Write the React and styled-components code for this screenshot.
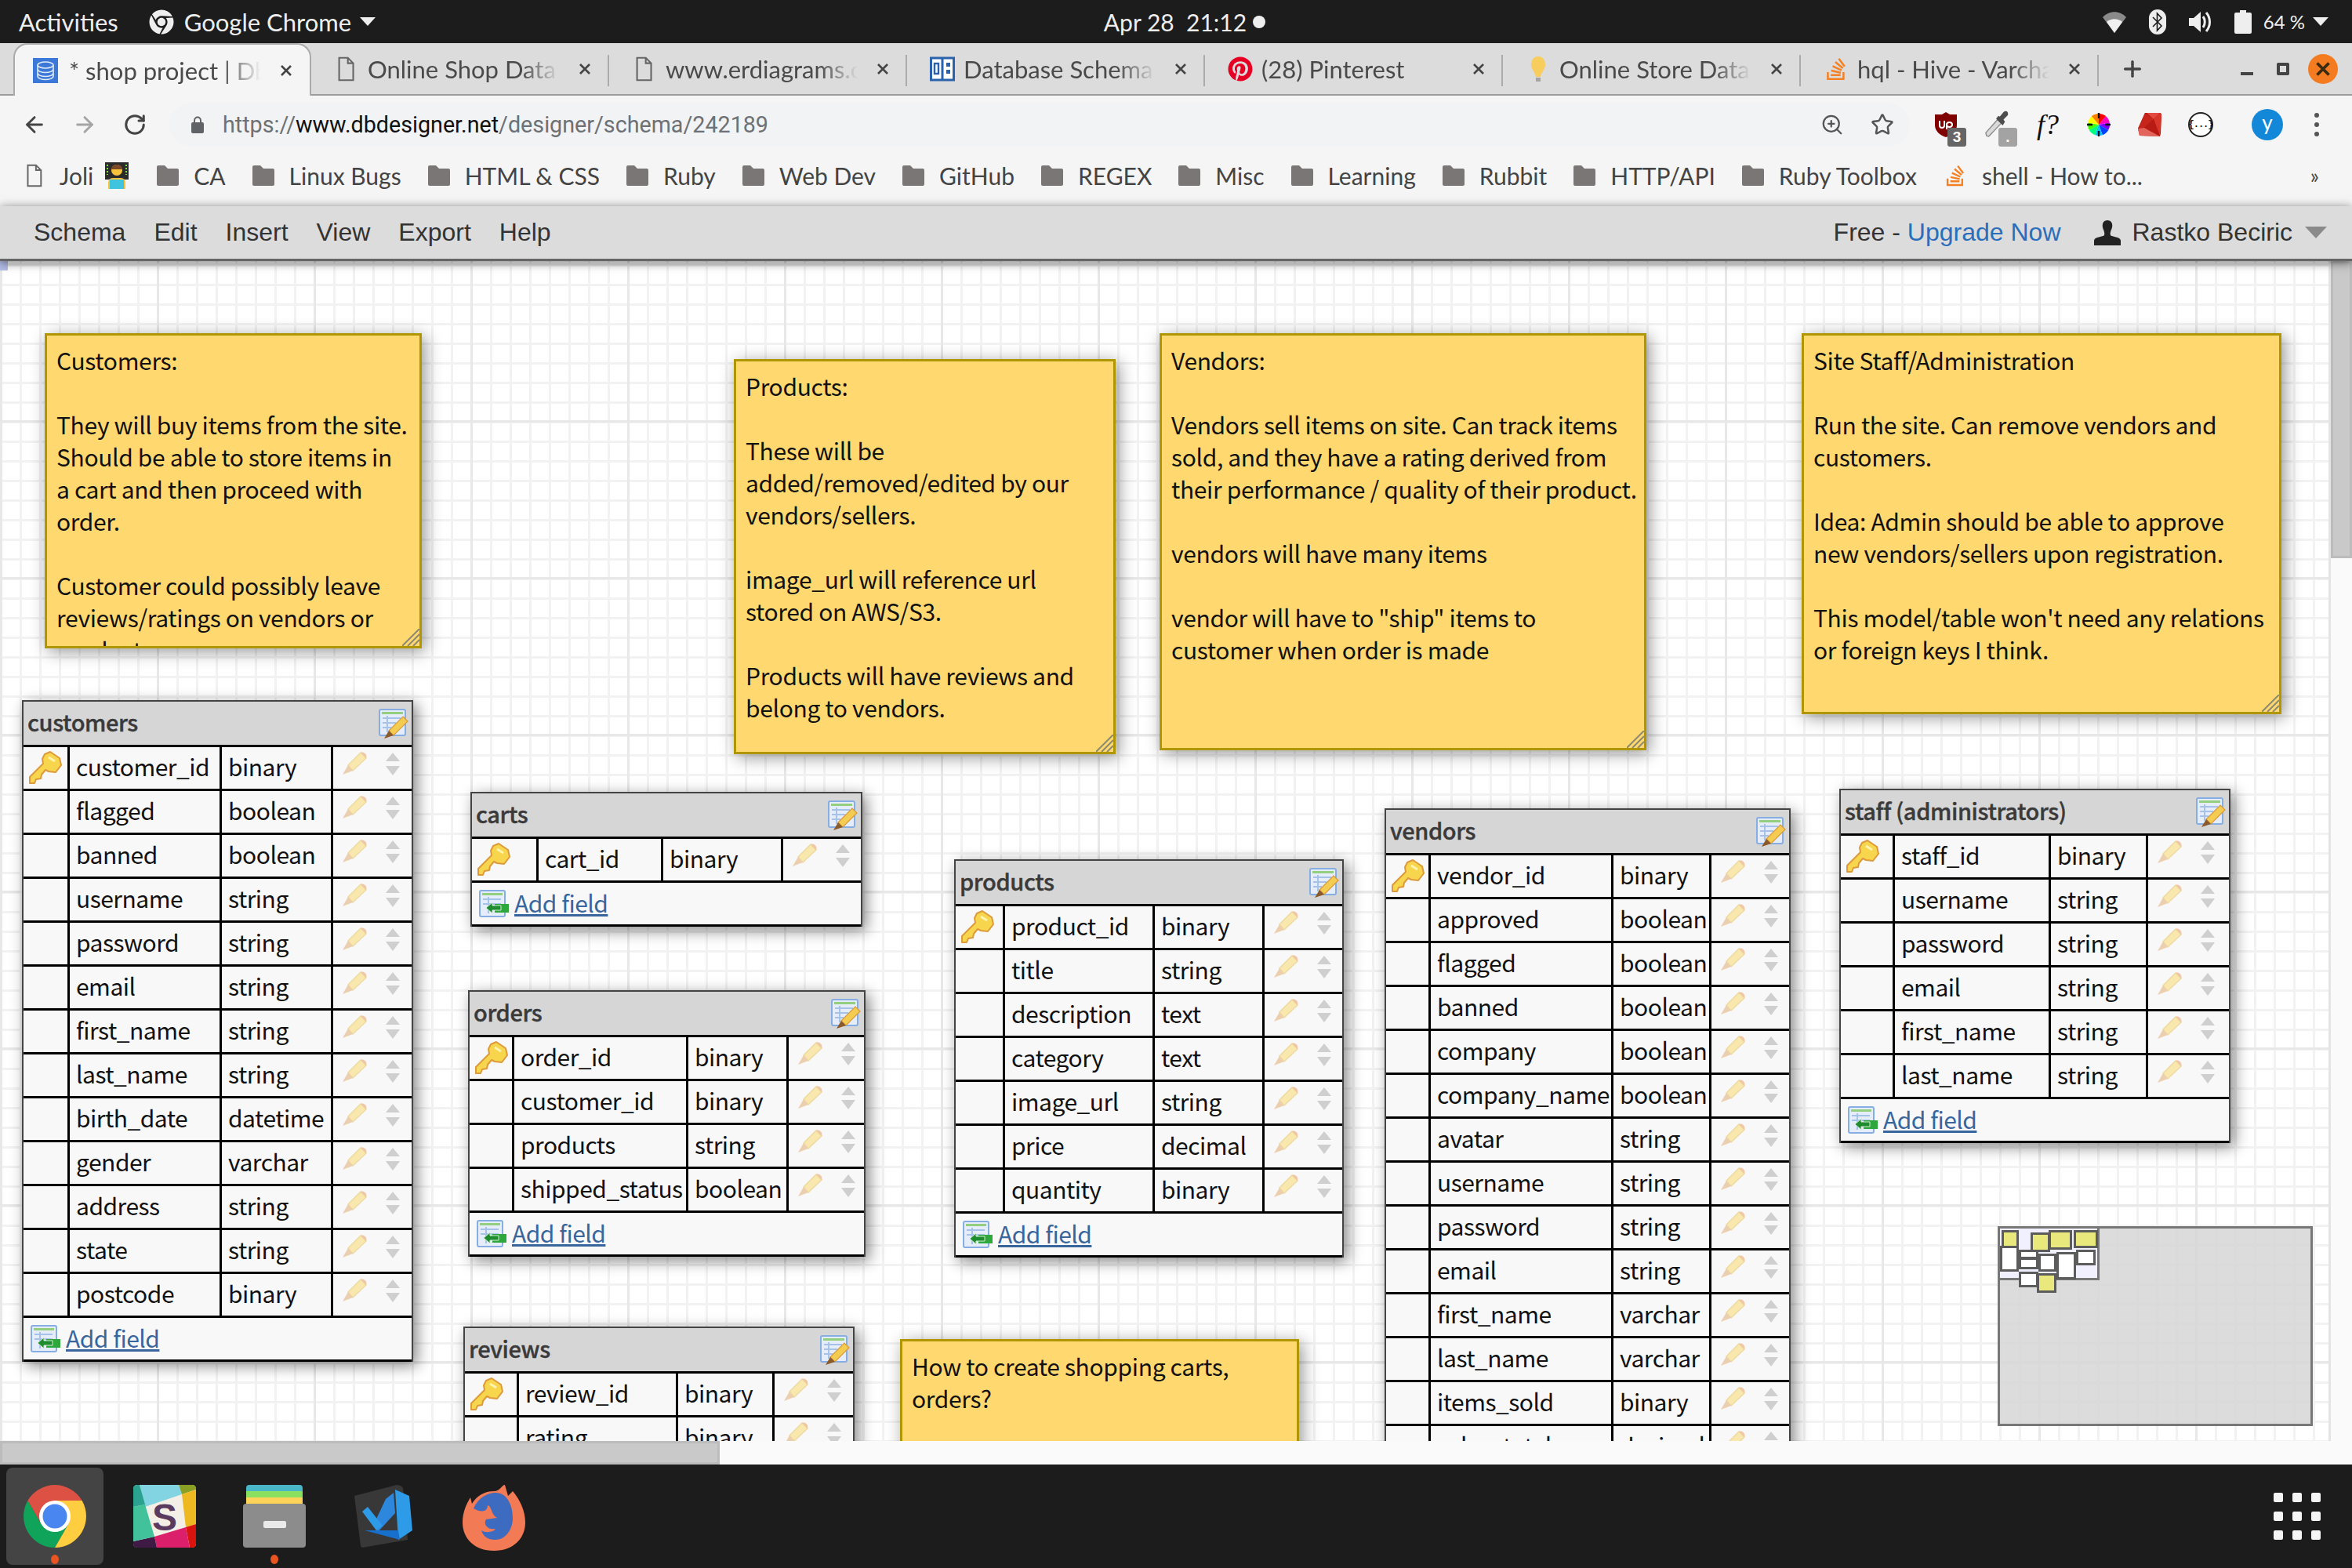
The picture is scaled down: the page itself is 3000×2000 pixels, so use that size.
import React from "react";
import styled, { createGlobalStyle } from "styled-components";
import { ArrowLeft, ArrowRight, RotateCw, ZoomIn, Star, Plus } from "lucide-react";
import { FaChrome, FaPinterest, FaStackOverflow } from "react-icons/fa";

const Global = createGlobalStyle`
  html, body { margin: 0; padding: 0; background: #fff; }
  * { box-sizing: border-box; }
`;

const UI_FONT = `Lato, "Open Sans", sans-serif`;
const CANVAS_FONT = `"Noto Sans CJK SC", "Noto Sans", sans-serif`;

const Page = styled.div`
  width: 3000px;
  height: 2000px;
  display: flex;
  flex-direction: column;
  overflow: hidden;
`;

/* ---------- gnome top bar ---------- */
const TopBar = styled.div`
  height: 55px;
  flex: none;
  background: #1c1c1c;
  color: #eee;
  font: 400 31px ${UI_FONT};
  display: grid;
  grid-template-columns: 1fr auto 1fr;
  align-items: center;
  padding: 0 30px 0 24px;
`;
const TopLeft = styled.div`
  display: flex;
  align-items: center;
`;
const AppName = styled.span`
  margin: 0 11px 0 13px;
`;
const Activities = styled.span`
  margin-right: 39px;
`;
const Clock = styled.div`
  display: flex;
  align-items: center;
  gap: 8px;
  padding-left: 28px;
  white-space: pre;
  font-size: 30px;
`;
const RecDot = styled.span`
  width: 16px;
  height: 16px;
  border-radius: 50%;
  background: #eee;
`;
const TopRight = styled.div`
  display: flex;
  align-items: center;
  justify-content: flex-end;
  gap: 28px;
`;
const Battery = styled.span`
  font-size: 24px;
  margin-left: -13px;
  margin-right: -18px;
`;
const Caret = styled.span`
  width: 0;
  height: 0;
  border-left: ${(p) => p.$size || 10}px solid transparent;
  border-right: ${(p) => p.$size || 10}px solid transparent;
  border-top: ${(p) => (p.$size || 10) * 1.1}px solid ${(p) => p.$color || "#eee"};
`;

/* ---------- chrome tabs ---------- */
const TabStrip = styled.div`
  height: 67px;
  flex: none;
  background: #dcdcdc;
  border-bottom: 2px solid #9c9c9c;
  display: flex;
  padding-left: 17px;
  font: 400 31px ${UI_FONT};
  color: #4a4a4a;
  position: relative;
`;
const Tab = styled.div`
  width: 380px;
  height: ${(p) => (p.$active ? 67 : 65)}px;
  flex: none;
  display: flex;
  align-items: center;
  position: relative;
  padding-left: ${(p) => (p.$active ? 23 : 29)}px;
  ${(p) =>
    p.$active &&
    `
    background: #f5f5f5;
    border: 2px solid #aaa;
    border-bottom: none;
    border-radius: 18px 18px 0 0;
    z-index: 1;
  `}
  ${(p) =>
    p.$sep &&
    `
    &::after {
      content: "";
      position: absolute;
      right: 0;
      top: 15px;
      height: 40px;
      width: 2px;
      background: #ababab;
    }
  `}
`;
const TabIcon = styled.span`
  width: 32px;
  height: 32px;
  flex: none;
  display: flex;
  align-items: center;
  justify-content: center;
  margin-right: ${(p) => (p.$active ? 14 : 11)}px;
`;
const TabTitle = styled.span`
  width: 245px;
  overflow: hidden;
  white-space: nowrap;
  margin-right: 24px;
  mask-image: linear-gradient(to right, #000 80%, transparent 100%);
`;
const NewTab = styled.div`
  width: 60px;
  display: flex;
  align-items: center;
  justify-content: center;
  color: #444;
  margin-left: 13px;
`;
const WindowButtons = styled.div`
  margin-left: auto;
  display: flex;
  align-items: center;
  padding-right: 18px;
  gap: 30px;
`;
const Minimize = styled.span`
  width: 16px;
  height: 4px;
  background: #444;
  margin-top: 12px;
`;
const Maximize = styled.span`
  width: 16px;
  height: 16px;
  border: 4px solid #444;
  border-radius: 2px;
`;
const CloseWin = styled.span`
  width: 38px;
  height: 38px;
  border-radius: 50%;
  background: #f47b20;
  display: flex;
  align-items: center;
  justify-content: center;
  margin-left: -6px;
`;

/* ---------- address bar ---------- */
const Toolbar = styled.div`
  height: 65px;
  flex: none;
  background: #f5f5f5;
  display: flex;
  align-items: center;
  padding: 9px 0 0 28px;
  color: #555;
`;
const NavButton = styled.span`
  width: 32px;
  display: flex;
  justify-content: center;
  margin-right: 32px;
  color: ${(p) => (p.$off ? "#a5a5a5" : "#444")};
`;
const Omnibox = styled.div`
  width: 2220px;
  height: 56px;
  margin-left: -4px;
  border-radius: 28px;
  background: #f1f3f4;
  display: flex;
  align-items: center;
  padding: 0 20px 0 28px;
  font: 400 28.7px Roboto, sans-serif;
  color: #6d7175;
`;
const Url = styled.span`
  margin-left: 24px;
  flex: 1;
`;
const Domain = styled.span`
  color: #111;
`;
const OmniIcons = styled.div`
  display: flex;
  align-items: center;
  gap: 34px;
  color: #555;
`;
const Extensions = styled.div`
  display: flex;
  align-items: center;
  gap: 33px;
  margin-left: 30px;
`;
const Ext = styled.span`
  width: 32px;
  height: 32px;
  position: relative;
  display: flex;
  align-items: center;
  justify-content: center;
`;
const Badge = styled.span`
  position: absolute;
  left: 18px;
  top: 20px;
  width: 24px;
  height: 24px;
  border-radius: 3px;
  background: ${(p) => p.$bg};
  color: #fff;
  font: 700 19px "Liberation Sans", sans-serif;
  display: flex;
  align-items: center;
  justify-content: center;
`;
const FormulaGlyph = styled.span`
  font: italic 400 36px "Liberation Serif", serif;
  color: #111;
  white-space: nowrap;
`;
const CurlyGlyph = styled.span`
  width: 32px;
  height: 32px;
  border-radius: 50%;
  border: 2px solid #222;
  background: #fff;
  font: 700 12px "Liberation Mono", monospace;
  letter-spacing: -1px;
  color: #111;
  display: flex;
  align-items: center;
  justify-content: center;
`;
const Avatar = styled.span`
  width: 40px;
  height: 40px;
  border-radius: 50%;
  background: #1488d8;
  color: #fff;
  font: 400 26px ${UI_FONT};
  display: flex;
  align-items: center;
  justify-content: center;
  margin-left: 49px;
  padding-bottom: 6px;
`;
const Kebab = styled.span`
  width: 6px;
  margin-left: 40px;
  display: flex;
  flex-direction: column;
  gap: 6px;
  i {
    display: block;
    width: 6px;
    height: 6px;
    border-radius: 50%;
    background: #555;
  }
`;

/* ---------- bookmarks ---------- */
const Bookmarks = styled.div`
  height: 76px;
  flex: none;
  background: #f5f5f5;
  display: flex;
  align-items: center;
  padding: 0 42px 2px 34px;
  gap: 34px;
  font: 400 30px ${UI_FONT};
  color: #444;
`;
const Bookmark = styled.div`
  display: flex;
  align-items: center;
  gap: ${(p) => p.$gap ?? 19}px;
  white-space: nowrap;
`;
const EmojiMark = styled.svg`
  margin-left: -9px;
`;
const More = styled.span`
  margin-left: auto;
  font-size: 26px;
`;

/* ---------- dbdesigner menu ---------- */
const MenuBar = styled.div`
  height: 70px;
  flex: none;
  background: #dcdcdc;
  border-bottom: 3px solid #666;
  box-shadow: 0 2px 12px rgba(0, 0, 0, 0.55);
  position: relative;
  z-index: 5;
  display: flex;
  align-items: center;
  padding: 0 32px 0 43px;
  font: 400 32px "Liberation Sans", sans-serif;
  color: #333;
`;
const MenuItems = styled.div`
  display: flex;
  gap: 36px;
`;
const Account = styled.div`
  margin-left: auto;
  display: flex;
  align-items: center;
`;
const Upgrade = styled.span`
  color: #2a6ebb;
  margin-right: 42px;
`;
const UserName = styled.span`
  margin: 0 16px 0 15px;
`;

/* ---------- canvas ---------- */
const Workspace = styled.div`
  height: 1505px;
  flex: none;
  display: flex;
`;
const Canvas = styled.div`
  width: 2970px;
  height: 1505px;
  position: relative;
  overflow: hidden;
  background-color: #fff;
  background-image: linear-gradient(to right, #e8e8e8 3px, transparent 3px),
    linear-gradient(to bottom, #e8e8e8 3px, transparent 3px),
    linear-gradient(to right, #f2f2f2 3px, transparent 3px),
    linear-gradient(to bottom, #f2f2f2 3px, transparent 3px);
  background-size: 200px 200px, 200px 200px, 25px 25px, 25px 25px;
  background-position: 0 3px, 0 3px, 0 3px, 0 4px;
`;
const Marker = styled.div`
  position: absolute;
  left: 0;
  top: 0;
  width: 10px;
  height: 12px;
  background: #b3bde8;
`;
const VTrack = styled.div`
  width: 30px;
  background: #fafafa;
  border-left: 3px solid #e4e4e4;
`;
const VThumb = styled.div`
  height: 379px;
  background: #c9c9c9;
  border: 3px solid #bcbcbc;
`;
const HTrack = styled.div`
  height: 30px;
  flex: none;
  background: #fafafa;
`;
const HThumb = styled.div`
  width: 918px;
  height: 30px;
  background: #c9c9c9;
  border: 3px solid #bcbcbc;
`;

const Note = styled.div`
  position: absolute;
  left: ${(p) => p.$x}px;
  top: ${(p) => p.$y}px;
  width: ${(p) => p.$w}px;
  height: ${(p) => p.$h}px;
  background: #ffd86f;
  border: 3px solid #b09600;
  box-shadow: 4px 4px 20px rgba(0, 0, 0, 0.42);
  padding: 11px 12px;
  overflow: hidden;
  white-space: pre;
  font: 400 30px/41px ${CANVAS_FONT};
  letter-spacing: -0.35px;
  color: #111;
`;
const NoteGrip = styled.svg`
  position: absolute;
  right: 0;
  bottom: 0;
`;

const Table = styled.div`
  position: absolute;
  left: ${(p) => p.$x}px;
  top: ${(p) => p.$y}px;
  width: ${(p) => p.$w}px;
  border: 2px solid #444;
  border-bottom: none;
  background: #f8f8f8;
  box-shadow: 5px 5px 18px rgba(0, 0, 0, 0.48);
  font: 400 30px ${CANVAS_FONT};
  letter-spacing: -0.5px;
  color: #111;
`;
const TableHead = styled.div`
  height: 55px;
  background: #d6d6d6;
  display: flex;
  align-items: center;
  justify-content: space-between;
  padding: 0 4px 0 5px;
  font-weight: 500;
  font-size: 29px;
  letter-spacing: -0.4px;
  color: #3a3a3a;
  -webkit-text-stroke: 0.4px #3a3a3a;
  span {
    margin-bottom: 5px;
  }
`;
const FieldRow = styled.div`
  height: 56px;
  border-top: 3px solid #000;
  display: grid;
  grid-template-columns: ${(p) => p.$cols.map((c) => `${c}px`).join(" ")} 1fr;
`;
const KeyCell = styled.div`
  border-right: 3px solid #000;
  padding: 5px 0 0 7px;
`;
const TextCell = styled.div`
  border-right: 3px solid #000;
  padding-left: 8px;
  line-height: 48px;
  white-space: nowrap;
  overflow: hidden;
`;
const ActionCell = styled.div`
  display: flex;
  padding: 6px 0 0 12px;
  gap: 24px;
`;
const TableFoot = styled.div`
  height: 59px;
  border-top: 3px solid #000;
  border-bottom: 3px solid #000;
  display: flex;
  align-items: center;
  padding-left: 9px;
  gap: 7px;
`;
const AddLink = styled.span`
  color: #38669c;
  text-decoration: underline;
  line-height: 1;
  margin-bottom: 3px;
`;

const MiniMap = styled.div`
  position: absolute;
  left: 2548px;
  top: 1231px;
  width: 402px;
  height: 255px;
  background: rgba(214, 214, 214, 0.85);
  border: 3px solid #777;
`;
const MiniView = styled.div`
  position: absolute;
  left: 0;
  top: 0;
  width: 127px;
  height: 66px;
  background: #f0f0ff;
  border-right: 3px solid #777;
  border-bottom: 3px solid #777;
`;
const MiniNode = styled.div`
  position: absolute;
  left: ${(p) => p.$x}px;
  top: ${(p) => p.$y}px;
  width: ${(p) => p.$w}px;
  height: ${(p) => p.$h}px;
  border: 3px solid #5c5c5c;
  background: ${(p) => (p.$note ? "#e8e87c" : "#fff")};
`;

/* ---------- dock ---------- */
const Dock = styled.div`
  flex: 1;
  background: #1c1c1c;
  display: flex;
  align-items: center;
  padding: 0 40px 0 8px;
`;
const DockItem = styled.div`
  width: 124px;
  height: 124px;
  margin-right: 16px;
  border-radius: 8px;
  background: ${(p) => (p.$active ? "#444" : "transparent")};
  display: flex;
  justify-content: center;
  padding-top: 22px;
  position: relative;
`;
const RunDot = styled.span`
  position: absolute;
  left: 57px;
  bottom: 1px;
  width: 10px;
  height: 12px;
  border-radius: 50%;
  background: #e95420;
`;
const AppGrid = styled.div`
  margin-left: auto;
  display: grid;
  grid-template-columns: repeat(3, 12px);
  grid-auto-rows: 12px;
  gap: 12px;
  i {
    background: #f5f5f5;
    border-radius: 2px;
  }
`;

/* ---------- drawings ---------- */
const CloseX = ({ color = "#444", size = 16, width = 2.6 }) => (
  <svg width={size} height={size} viewBox="0 0 16 16">
    <path d="M2 2 L14 14 M14 2 L2 14" stroke={color} strokeWidth={width} fill="none" />
  </svg>
);
const DocIcon = ({ h = 32 }) => (
  <svg width={h * 0.66} height={h} viewBox="0 0 20 30" fill="none" stroke="#666" strokeWidth="2">
    <path d="M1.5 1.5 H12 L18.5 8 V28.5 H1.5 Z M12 1.5 V8 H18.5" />
  </svg>
);
const Folder = () => (
  <svg width="28" height="28" viewBox="0 0 28 28">
    <path d="M0 3 Q0 1 2 1 H10 L14 5 H26 Q28 5 28 7 V25 Q28 27 26 27 H2 Q0 27 0 25 Z" fill="#7b7676" />
  </svg>
);
const DbFavicon = () => (
  <svg width="32" height="32" viewBox="0 0 32 32">
    <rect width="32" height="32" fill="#3c78d8" />
    <g fill="none" stroke="#dfe9f8" strokeWidth="1.6">
      <ellipse cx="16" cy="9" rx="10" ry="4" />
      <path d="M6 9 V23 C6 29 26 29 26 23 V9 M6 14 C6 20 26 20 26 14 M6 19 C6 25 26 25 26 19" />
    </g>
  </svg>
);
const SchemaFavicon = () => (
  <svg width="32" height="32" viewBox="0 0 32 32">
    <rect x="1.5" y="2" width="29" height="28" fill="#fff" stroke="#2b62ae" strokeWidth="3" />
    <rect x="14.5" y="2" width="3" height="28" fill="#2b62ae" />
    <rect x="6" y="9" width="5" height="13" fill="none" stroke="#2b62ae" strokeWidth="2.4" />
    <rect x="21" y="8" width="5" height="5" fill="#2b62ae" />
    <rect x="21" y="17" width="5" height="5" fill="#2b62ae" />
  </svg>
);
const Bulb = () => (
  <svg width="20" height="32" viewBox="0 0 20 32">
    <path d="M10 0 C17 0 19 6 19 11 C19 16 14 20 13 26 H7 C6 20 1 16 1 11 C1 6 3 0 10 0 Z" fill="#f7cd5e" />
    <rect x="7" y="27" width="6" height="5" fill="#a5a5a5" />
  </svg>
);
const Wifi = () => (
  <svg width="30" height="30" viewBox="0 0 30 30">
    <path d="M0 9 C8 0 22 0 30 9 L15 29 Z" fill="#8a8a8a" />
    <path d="M5 15 C11 10 19 10 25 15 L15 29 Z" fill="#f0f0f0" />
  </svg>
);
const Bluetooth = () => (
  <svg width="24" height="32" viewBox="0 0 24 32">
    <rect x="1" y="0" width="22" height="32" rx="11" fill="#eee" />
    <path d="M6 10 L17 21 L11.5 27 V5 L17 11 L6 22" stroke="#1c1c1c" strokeWidth="1.6" fill="none" />
  </svg>
);
const Speaker = () => (
  <svg width="30" height="30" viewBox="0 0 30 30">
    <path d="M0 10 H6 L15 2 V28 L6 20 H0 Z" fill="#eee" />
    <path d="M18 8 C21 12 21 18 18 22 M22 3 C28 10 28 20 22 27" stroke="#eee" strokeWidth="3" fill="none" />
  </svg>
);
const BatteryIcon = () => (
  <svg width="22" height="30" viewBox="0 0 22 30">
    <rect x="7" y="0" width="8" height="3" fill="#eee" />
    <rect x="0" y="3" width="22" height="27" rx="2" fill="#eee" />
  </svg>
);
const UBlock = () => (
  <svg width="30" height="34" viewBox="0 0 30 34">
    <path d="M15 1 L20 4 L29 4 V18 C29 25 22 31 15 33 C8 31 1 25 1 18 V4 L10 4 Z" fill="#800000" />
    <path d="M7 12 V18 C7 22 13 22 13 18 V12 M16 23 V17 C16 13 23 13 23 17 C23 21 16 21 16 17" stroke="#fff" strokeWidth="2" fill="none" />
  </svg>
);
const Dropper = () => (
  <svg width="34" height="38" viewBox="0 0 34 38">
    <path d="M3 34 L2 30 L18 12 L23 17 L6 35 Z" fill="#d9d9d9" stroke="#8c8c8c" strokeWidth="1.5" />
    <path d="M16 11 L25 20 L28 15 L26 12 L32 6 C33 1 29 -1 26 2 L21 8 L19 7 Z" fill="#4d4d4d" />
  </svg>
);
const ColorWheel = () => (
  <svg width="32" height="32" viewBox="0 0 32 32">
    <defs>
      <clipPath id="wheelClip">
        <circle cx="16" cy="16" r="14" />
      </clipPath>
    </defs>
    <g clipPath="url(#wheelClip)">
      {["#ff0000", "#ff00c0", "#8000ff", "#0040ff", "#00c0ff", "#00ff80", "#40ff00", "#ffff00", "#ff8000"].map((c, i) => {
        const a1 = (i * 40 * Math.PI) / 180;
        const a2 = ((i + 1) * 40 * Math.PI) / 180;
        return (
          <path
            key={c}
            d={`M16 16 L${16 + 20 * Math.sin(a1)} ${16 - 20 * Math.cos(a1)} L${16 + 20 * Math.sin(a2)} ${16 - 20 * Math.cos(a2)} Z`}
            fill={c}
          />
        );
      })}
    </g>
    <path d="M16 1 V8 M16 24 V31 M1 16 H8 M24 16 H31" stroke="#111" strokeWidth="2.4" />
  </svg>
);
const Ruby = () => (
  <svg width="32" height="32" viewBox="0 0 32 32">
    <path d="M10 1 H29 Q31 1 31 4 L30 27 L29 31 L3 30 L1 21 Z" fill="#a91410" />
    <path d="M10 1 L21 9 L9 20 L1 21 Z" fill="#c6251c" />
    <path d="M12 1 H29 L21 9 Z" fill="#e4493f" />
    <path d="M21 9 L29 1 L31 4 L29 31 Z" fill="#d8352b" />
    <path d="M21 9 L29 31 L9 20 Z" fill="#b81a14" />
    <path d="M1 21 L9 20 L29 31 L3 30 Z" fill="#e2645c" />
  </svg>
);
const UserIcon = () => (
  <svg width="34" height="32" viewBox="0 0 34 32">
    <path d="M17 0 C22 0 24 4 23 9 C22 13 20 15 21 19 C22 21 34 21 34 26 V32 H0 V26 C0 21 12 21 13 19 C14 15 12 13 11 9 C10 4 12 0 17 0 Z" fill="#222" />
  </svg>
);
const Key = () => (
  <svg width="42" height="42" viewBox="0 0 42 42">
    <path
      d="M27 1 L39 9 L41 18 L34 27 L25 26 L21 24 L16 30 L15 35 L9 36 L7 41 L1 41 L1 33 L18 16 L17 10 L20 4 Z"
      fill="#f7d64e"
      stroke="#dd9a3a"
      strokeWidth="2"
      strokeLinejoin="round"
    />
    <path d="M25 8 L33 13" stroke="#fff3b0" strokeWidth="3" />
  </svg>
);
const Pencil = () => (
  <svg width="31" height="30" viewBox="0 0 31 30">
    <path d="M7 17 L23 1 L30 8 L13 24 Z" fill="#f8e8ae" stroke="#eed9a0" strokeWidth="1.5" />
    <path d="M23 1 C27 -1 32 4 30 8 Z" fill="#f0c7a6" />
    <path d="M7 17 L13 24 L0 29 Z" fill="#eccfae" />
  </svg>
);
const SortArrows = () => (
  <svg width="18" height="32" viewBox="0 0 18 32">
    <path d="M9 1 L18 12 H0 Z M0 18 H18 L9 30 Z" fill="#cfcfcf" />
  </svg>
);
const TableEdit = () => (
  <svg width="38" height="38" viewBox="0 0 38 38">
    <rect x="1" y="1" width="33" height="33" rx="2" fill="#e4edf9" stroke="#87aee3" strokeWidth="2" />
    <rect x="4" y="4" width="27" height="3" fill="#93cf7f" />
    <path d="M5 12 H28 M5 18 H22 M5 24 H16 M11 9 V30" stroke="#a7c2e8" strokeWidth="2" />
    <path d="M13 28 L31 10 L37 16 L19 34 Z" fill="#f4cc52" stroke="#d89a3a" strokeWidth="1.2" />
    <path d="M13 28 L19 34 L7 38 Z" fill="#8a5a2a" />
  </svg>
);
const AddFieldIcon = () => (
  <svg width="38" height="36" viewBox="0 0 38 36">
    <rect x="1" y="1" width="32" height="33" rx="2" fill="#e4edf9" stroke="#87aee3" strokeWidth="2" />
    <rect x="4" y="4" width="26" height="3" fill="#93cf7f" />
    <path d="M5 12 H28 M5 18 H28 M12 9 V30" stroke="#a7c2e8" strokeWidth="2" />
    <rect x="20" y="18" width="18" height="11" fill="#2ea83c" />
    <path d="M9 23 L17 16 V20 H28 V26 H17 V30 Z" fill="#1f8c2f" stroke="#d3ecd3" strokeWidth="1" />
  </svg>
);
const ChromeLogo = () => (
  <svg width="80" height="80" viewBox="0 0 80 80">
    <path d="M40 80 A40 40 0 0 1 5.4 20 L22.7 50 L57.3 50 Z" fill="#10a35a" />
    <path d="M5.4 20 A40 40 0 0 1 74.6 20 L40 20 L22.7 50 Z" fill="#dd5144" />
    <path d="M74.6 20 A40 40 0 0 1 40 80 L57.3 50 L40 20 Z" fill="#ffcd40" />
    <circle cx="40" cy="40" r="20" fill="#fff" />
    <circle cx="40" cy="40" r="15.5" fill="#4a86f0" />
  </svg>
);
const SlackLogo = () => (
  <svg width="80" height="80" viewBox="0 0 80 80">
    <rect width="80" height="80" rx="5" fill="#f4efe6" />
    <path d="M8 0 H58 L62 12 L15 28 Z" fill="#83d4e3" />
    <path d="M58 0 H75 Q80 0 80 5 V6 L62 12 Z" fill="#8aa024" />
    <path d="M62 12 L80 6 V50 L67 54 Z" fill="#edb820" />
    <path d="M67 54 L80 50 V75 Q80 80 75 80 H72 Z" fill="#d9140f" />
    <path d="M27 66 L67 54 L72 80 H30 Z" fill="#dc1f6b" />
    <path d="M0 72 L27 66 L30 80 H5 Q0 80 0 75 Z" fill="#3e1a45" />
    <path d="M0 28 L15 25 L27 66 L0 72 Z" fill="#42c29b" />
    <path d="M0 5 Q0 0 5 0 H8 L15 25 L0 28 Z" fill="#2aa28f" />
    <text x="40" y="58" textAnchor="middle" fontFamily="Liberation Sans, sans-serif" fontWeight="700" fontSize="48" fill="#5a3a5e">
      S
    </text>
  </svg>
);
const FilesLogo = () => (
  <svg width="80" height="80" viewBox="0 0 80 80">
    <path d="M4 4 Q4 0 8 0 H72 Q76 0 76 4 V12 H4 Z" fill="#4ab7c8" />
    <rect x="4" y="8" width="72" height="10" fill="#8be05f" />
    <rect x="4" y="16" width="72" height="10" fill="#ffd25a" />
    <rect x="0" y="24" width="80" height="56" rx="4" fill="#8c8c8c" />
    <rect x="26" y="46" width="29" height="9" rx="2" fill="#eaeaea" />
  </svg>
);
const CodeLogo = () => (
  <svg width="76" height="80" viewBox="0 0 76 80">
    <path d="M0 14 L54 0 Q60 0 62 4 L68 70 L10 80 L8 78 Z" fill="#383838" />
    <path d="M52 6 L70 14 L74 58 L56 70 Z" fill="#2d9be8" />
    <path d="M40 18 L50 10 L52 36 L30 60 L24 52 Z" fill="#2d87dc" />
    <path d="M10 34 L17 28 L36 52 L28 58 Z" fill="#2d9be8" />
    <path d="M13 58 L56 58 L58 70 Z" fill="#1670cc" />
  </svg>
);
const FirefoxLogo = () => (
  <svg width="80" height="84" viewBox="0 0 80 84">
    <path d="M40 84 C15 84 0 68 0 48 C0 36 4 26 10 16 L12 24 C18 14 28 8 40 8 C48 8 50 0 54 0 L58 14 L64 8 C74 20 80 34 80 48 C80 68 65 84 40 84 Z" fill="#f27a55" />
    <path d="M14 30 C20 16 32 10 42 10 C58 10 64 28 64 42 C64 58 54 70 42 70 C30 70 26 64 24 58 C30 62 40 60 42 56 C32 58 26 50 30 44 L44 42 C36 38 38 28 32 26 C32 34 24 36 14 30 Z" fill="#3d6bbf" />
  </svg>
);

/* ---------- data ---------- */
const TABS = [
  { title: "* shop project | DbDesigner", icon: <DbFavicon />, active: true },
  { title: "Online Shop Data Model", icon: <DocIcon />, sep: true },
  { title: "www.erdiagrams.com", icon: <DocIcon />, sep: true },
  { title: "Database Schema for", icon: <SchemaFavicon />, sep: true },
  { title: "(28) Pinterest", icon: <FaPinterest size={32} color="#e60023" />, sep: true },
  { title: "Online Store Database", icon: <Bulb />, sep: true },
  { title: "hql - Hive - Varchar vs", icon: <FaStackOverflow size={32} color="#f48024" />, sep: true },
];

const FOLDERS_A = ["CA", "Linux Bugs", "HTML & CSS", "Ruby", "Web Dev", "GitHub", "REGEX", "Misc", "Learning", "Rubbit", "HTTP/API", "Ruby Toolbox"];

const NOTES = [
  {
    x: 57, y: 92, w: 481, h: 402,
    text: "Customers:\n\nThey will buy items from the site.\nShould be able to store items in\na cart and then proceed with\norder.\n\nCustomer could possibly leave\nreviews/ratings on vendors or\nproducts.",
  },
  {
    x: 936, y: 125, w: 487, h: 504,
    text: "Products:\n\nThese will be\nadded/removed/edited by our\nvendors/sellers.\n\nimage_url will reference url\nstored on AWS/S3.\n\nProducts will have reviews and\nbelong to vendors.",
  },
  {
    x: 1479, y: 92, w: 621, h: 532,
    text: "Vendors:\n\nVendors sell items on site. Can track items\nsold, and they have a rating derived from\ntheir performance / quality of their product.\n\nvendors will have many items\n\nvendor will have to \"ship\" items to\ncustomer when order is made",
  },
  {
    x: 2298, y: 92, w: 612, h: 486,
    text: "Site Staff/Administration\n\nRun the site. Can remove vendors and\ncustomers.\n\nIdea: Admin should be able to approve\nnew vendors/sellers upon registration.\n\nThis model/table won't need any relations\nor foreign keys I think.",
  },
  { x: 1148, y: 1375, w: 509, h: 300, text: "How to create shopping carts,\norders?" },
];

const TABLES = [
  {
    name: "customers", x: 28, y: 560, w: 499, cols: [59, 194, 142],
    rows: [
      ["customer_id", "binary"], ["flagged", "boolean"], ["banned", "boolean"], ["username", "string"],
      ["password", "string"], ["email", "string"], ["first_name", "string"], ["last_name", "string"],
      ["birth_date", "datetime"], ["gender", "varchar"], ["address", "string"], ["state", "string"], ["postcode", "binary"],
    ],
  },
  { name: "carts", x: 600, y: 677, w: 500, cols: [85, 159, 153], rows: [["cart_id", "binary"]] },
  {
    name: "orders", x: 597, y: 930, w: 507, cols: [57, 222, 128],
    rows: [["order_id", "binary"], ["customer_id", "binary"], ["products", "string"], ["shipped_status", "boolean"]],
  },
  {
    name: "products", x: 1217, y: 763, w: 497, cols: [63, 191, 140],
    rows: [
      ["product_id", "binary"], ["title", "string"], ["description", "text"], ["category", "text"],
      ["image_url", "string"], ["price", "decimal"], ["quantity", "binary"],
    ],
  },
  {
    name: "vendors", x: 1766, y: 698, w: 518, cols: [57, 233, 125], noFoot: true,
    rows: [
      ["vendor_id", "binary"], ["approved", "boolean"], ["flagged", "boolean"], ["banned", "boolean"],
      ["company", "boolean"], ["company_name", "boolean"], ["avatar", "string"], ["username", "string"],
      ["password", "string"], ["email", "string"], ["first_name", "varchar"], ["last_name", "varchar"],
      ["items_sold", "binary"], ["sales_total", "decimal"],
    ],
  },
  {
    name: "staff (administrators)", x: 2346, y: 673, w: 499, cols: [69, 199, 124],
    rows: [["staff_id", "binary"], ["username", "string"], ["password", "string"], ["email", "string"], ["first_name", "string"], ["last_name", "string"]],
  },
  { name: "reviews", x: 591, y: 1359, w: 499, cols: [69, 203, 123], noFoot: true, rows: [["review_id", "binary"], ["rating", "binary"]] },
];

const MINI_NODES = [
  [2, 2, 22, 23, true], [39, 5, 25, 25, true], [62, 2, 30, 25, true], [94, 2, 31, 23, true],
  [0, 22, 24, 33], [24, 27, 25, 12], [24, 37, 25, 15], [49, 32, 23, 23], [72, 30, 25, 35], [97, 27, 25, 20],
  [24, 55, 25, 20], [47, 57, 25, 25, true],
];

function DbTable({ table }) {
  return (
    <Table $x={table.x} $y={table.y} $w={table.w}>
      <TableHead>
        <span>{table.name}</span>
        <TableEdit />
      </TableHead>
      {table.rows.map(([field, type], i) => (
        <FieldRow key={field} $cols={table.cols}>
          <KeyCell>{i === 0 && <Key />}</KeyCell>
          <TextCell>{field}</TextCell>
          <TextCell>{type}</TextCell>
          <ActionCell>
            <Pencil />
            <SortArrows />
          </ActionCell>
        </FieldRow>
      ))}
      {!table.noFoot && (
        <TableFoot>
          <AddFieldIcon />
          <AddLink>Add field</AddLink>
        </TableFoot>
      )}
    </Table>
  );
}

export default function App() {
  return (
    <Page>
      <Global />
      <TopBar>
        <TopLeft>
          <Activities>Activities</Activities>
          <FaChrome size={32} color="#eee" />
          <AppName>Google Chrome</AppName>
          <Caret />
        </TopLeft>
        <Clock>
          Apr 28  21:12
          <RecDot />
        </Clock>
        <TopRight>
          <Wifi />
          <Bluetooth />
          <Speaker />
          <BatteryIcon />
          <Battery>64 %</Battery>
          <Caret />
        </TopRight>
      </TopBar>

      <TabStrip>
        {TABS.map((t) => (
          <Tab key={t.title} $active={t.active} $sep={t.sep}>
            <TabIcon $active={t.active}>{t.icon}</TabIcon>
            <TabTitle>{t.title}</TabTitle>
            <CloseX />
          </Tab>
        ))}
        <NewTab>
          <Plus size={32} strokeWidth={2.6} />
        </NewTab>
        <WindowButtons>
          <Minimize />
          <Maximize />
          <CloseWin>
            <CloseX color="#3a2a10" size={20} width={3} />
          </CloseWin>
        </WindowButtons>
      </TabStrip>

      <Toolbar>
        <NavButton>
          <ArrowLeft size={32} strokeWidth={2.2} />
        </NavButton>
        <NavButton $off>
          <ArrowRight size={32} strokeWidth={2.2} />
        </NavButton>
        <NavButton>
          <RotateCw size={30} strokeWidth={2.4} />
        </NavButton>
        <Omnibox>
          <svg width="16" height="22" viewBox="0 0 16 22">
            <path d="M4 9 V6 C4 0 12 0 12 6 V9" stroke="#5f6368" strokeWidth="2" fill="none" />
            <rect y="8" width="16" height="14" rx="2" fill="#5f6368" />
          </svg>
          <Url>
            https://<Domain>www.dbdesigner.net</Domain>/designer/schema/242189
          </Url>
          <OmniIcons>
            <ZoomIn size={30} strokeWidth={1.8} />
            <Star size={30} strokeWidth={2} />
          </OmniIcons>
        </Omnibox>
        <Extensions>
          <Ext>
            <UBlock />
            <Badge $bg="#666">3</Badge>
          </Ext>
          <Ext>
            <Dropper />
            <Badge $bg="#a3a3a3">.</Badge>
          </Ext>
          <Ext>
            <FormulaGlyph>f?</FormulaGlyph>
          </Ext>
          <Ext>
            <ColorWheel />
          </Ext>
          <Ext>
            <Ruby />
          </Ext>
          <Ext>
            <CurlyGlyph>{"{...}"}</CurlyGlyph>
          </Ext>
        </Extensions>
        <Avatar>y</Avatar>
        <Kebab>
          <i />
          <i />
          <i />
        </Kebab>
      </Toolbar>

      <Bookmarks>
        <Bookmark $gap={22}>
          <DocIcon h={30} />
          <span>Joli</span>
          <EmojiMark width="34" height="34" viewBox="0 0 34 34">
            <rect x="2" y="0" width="30" height="22" fill="#2b2b2b" />
            <path d="M5 3 V16 M29 3 V16" stroke="#7fe04a" strokeWidth="2" strokeDasharray="2 2" />
            <circle cx="17" cy="10" r="7" fill="#f8c33a" />
            <path d="M10 9 C10 1 24 1 24 9 Z" fill="#7a4a28" />
            <path d="M6 34 V26 Q6 20 12 20 H22 Q28 20 28 26 V34 Z" fill="#f8c33a" />
            <rect x="8" y="22" width="18" height="12" fill="#3fc4e0" />
          </EmojiMark>
        </Bookmark>
        {FOLDERS_A.map((name) => (
          <Bookmark key={name}>
            <Folder />
            {name}
          </Bookmark>
        ))}
        <Bookmark>
          <FaStackOverflow size={30} color="#f48024" />
          shell - How to...
        </Bookmark>
        <More>»</More>
      </Bookmarks>

      <MenuBar>
        <MenuItems>
          {["Schema", "Edit", "Insert", "View", "Export", "Help"].map((m) => (
            <span key={m}>{m}</span>
          ))}
        </MenuItems>
        <Account>
          <span>Free -&nbsp;</span>
          <Upgrade>Upgrade Now</Upgrade>
          <UserIcon />
          <UserName>Rastko Beciric</UserName>
          <Caret $size={14} $color="#8a8a8a" />
        </Account>
      </MenuBar>

      <Workspace>
        <Canvas>
          <Marker />
          {NOTES.map((n) => (
            <Note key={n.x} $x={n.x} $y={n.y} $w={n.w} $h={n.h}>
              {n.text}
              <NoteGrip width="22" height="22" viewBox="0 0 22 22">
                <path d="M22 0 L0 22 M22 7 L7 22 M22 14 L14 22" stroke="#8d8a70" strokeWidth="2" />
              </NoteGrip>
            </Note>
          ))}
          {TABLES.map((t) => (
            <DbTable key={t.name} table={t} />
          ))}
          <MiniMap>
            <MiniView />
            {MINI_NODES.map(([x, y, w, h, note]) => (
              <MiniNode key={`${x}-${y}`} $x={x} $y={y} $w={w} $h={h} $note={note} />
            ))}
          </MiniMap>
        </Canvas>
        <VTrack>
          <VThumb />
        </VTrack>
      </Workspace>
      <HTrack>
        <HThumb />
      </HTrack>

      <Dock>
        <DockItem $active>
          <ChromeLogo />
          <RunDot />
        </DockItem>
        <DockItem>
          <SlackLogo />
        </DockItem>
        <DockItem>
          <FilesLogo />
          <RunDot />
        </DockItem>
        <DockItem>
          <CodeLogo />
        </DockItem>
        <DockItem>
          <FirefoxLogo />
        </DockItem>
        <AppGrid>
          {Array.from({ length: 9 }, (_, i) => (
            <i key={i} />
          ))}
        </AppGrid>
      </Dock>
    </Page>
  );
}
